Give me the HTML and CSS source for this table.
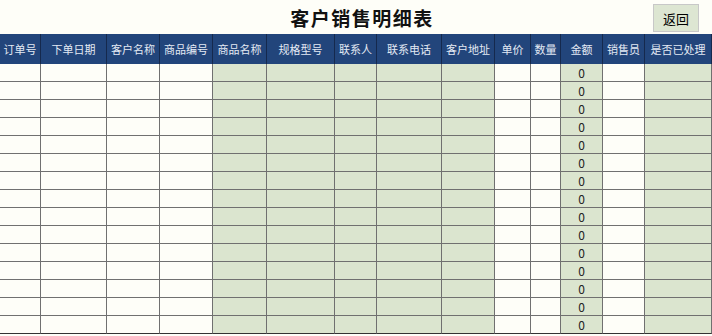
FILE: index.html
```html
<!DOCTYPE html>
<html lang="zh">
<head>
<meta charset="utf-8">
<link rel="stylesheet" href="styles.css">
</head>
<body>
<div class="sheet">
  <div class="titlebar">
    <h1 class="title">客户销售明细表</h1>
    <button class="back">返回</button>
  </div>
  <div class="grid">
    <div class="row head">
      <div class="c">订单号</div><div class="c">下单日期</div><div class="c">客户名称</div><div class="c">商品编号</div><div class="c">商品名称</div><div class="c">规格型号</div><div class="c">联系人</div><div class="c">联系电话</div><div class="c">客户地址</div><div class="c">单价</div><div class="c">数量</div><div class="c">金额</div><div class="c">销售员</div><div class="c">是否已处理</div>
    </div>
  </div>
</div>
<script>
  var grid = document.querySelector('.grid');
  var kinds = ['w','w','w','w','g','g','g','g','g','w','w','g','w','g'];
  for (var r = 0; r < 15; r++) {
    var row = document.createElement('div');
    row.className = 'row data';
    for (var i = 0; i < 14; i++) {
      var c = document.createElement('div');
      c.className = 'c ' + (kinds[i] === 'g' ? 'green' : 'white');
      if (i === 11) c.textContent = '0';
      row.appendChild(c);
    }
    grid.appendChild(row);
  }
</script>
</body>
</html>
```

FILE: styles.css
```css
html, body {
  margin: 0;
  padding: 0;
  background: #fefef8;
  font-family: "Noto Sans CJK SC", "Noto Sans", sans-serif;
}
.sheet {
  width: 712px;
  height: 336px;
  overflow: hidden;
}
.titlebar {
  height: 34px;
  position: relative;
  display: flex;
  align-items: center;
  justify-content: center;
}
.title {
  margin: 0;
  font-size: 19px;
  letter-spacing: 1.5px;
  font-weight: bold;
  color: #111;
  padding-left: 12px;
}
.back {
  position: absolute;
  left: 653px;
  top: 4px;
  width: 46px;
  height: 28px;
  border: 1px solid #c8c8c8;
  background: #dde6d2;
  font-family: "Noto Sans CJK SC", sans-serif;
  font-size: 13px;
  color: #000;
  padding: 0;
}
.row {
  display: grid;
  grid-template-columns: 41px 66px 53px 53px 54px 68px 42px 65px 53px 36px 30px 42px 42px 67px;
}
.head {
  height: 30px;
  background: #22457b;
}
.head .c {
  border-right: 1px solid #15294d;
  color: #e4eaf4;
  font-size: 11px;
  display: flex;
  align-items: center;
  justify-content: center;
  white-space: nowrap;
}
.data {
  height: 18px;
}
.data .c {
  border-right: 1px solid #707070;
  border-bottom: 1px solid #707070;
  font-size: 12px;
  color: #222;
  text-align: center;
  line-height: 17px;
}
.data:last-child .c {
  border-bottom-color: #333;
}
.white { background: #fefef8; }
.green { background: #dbe5cf; }
```
